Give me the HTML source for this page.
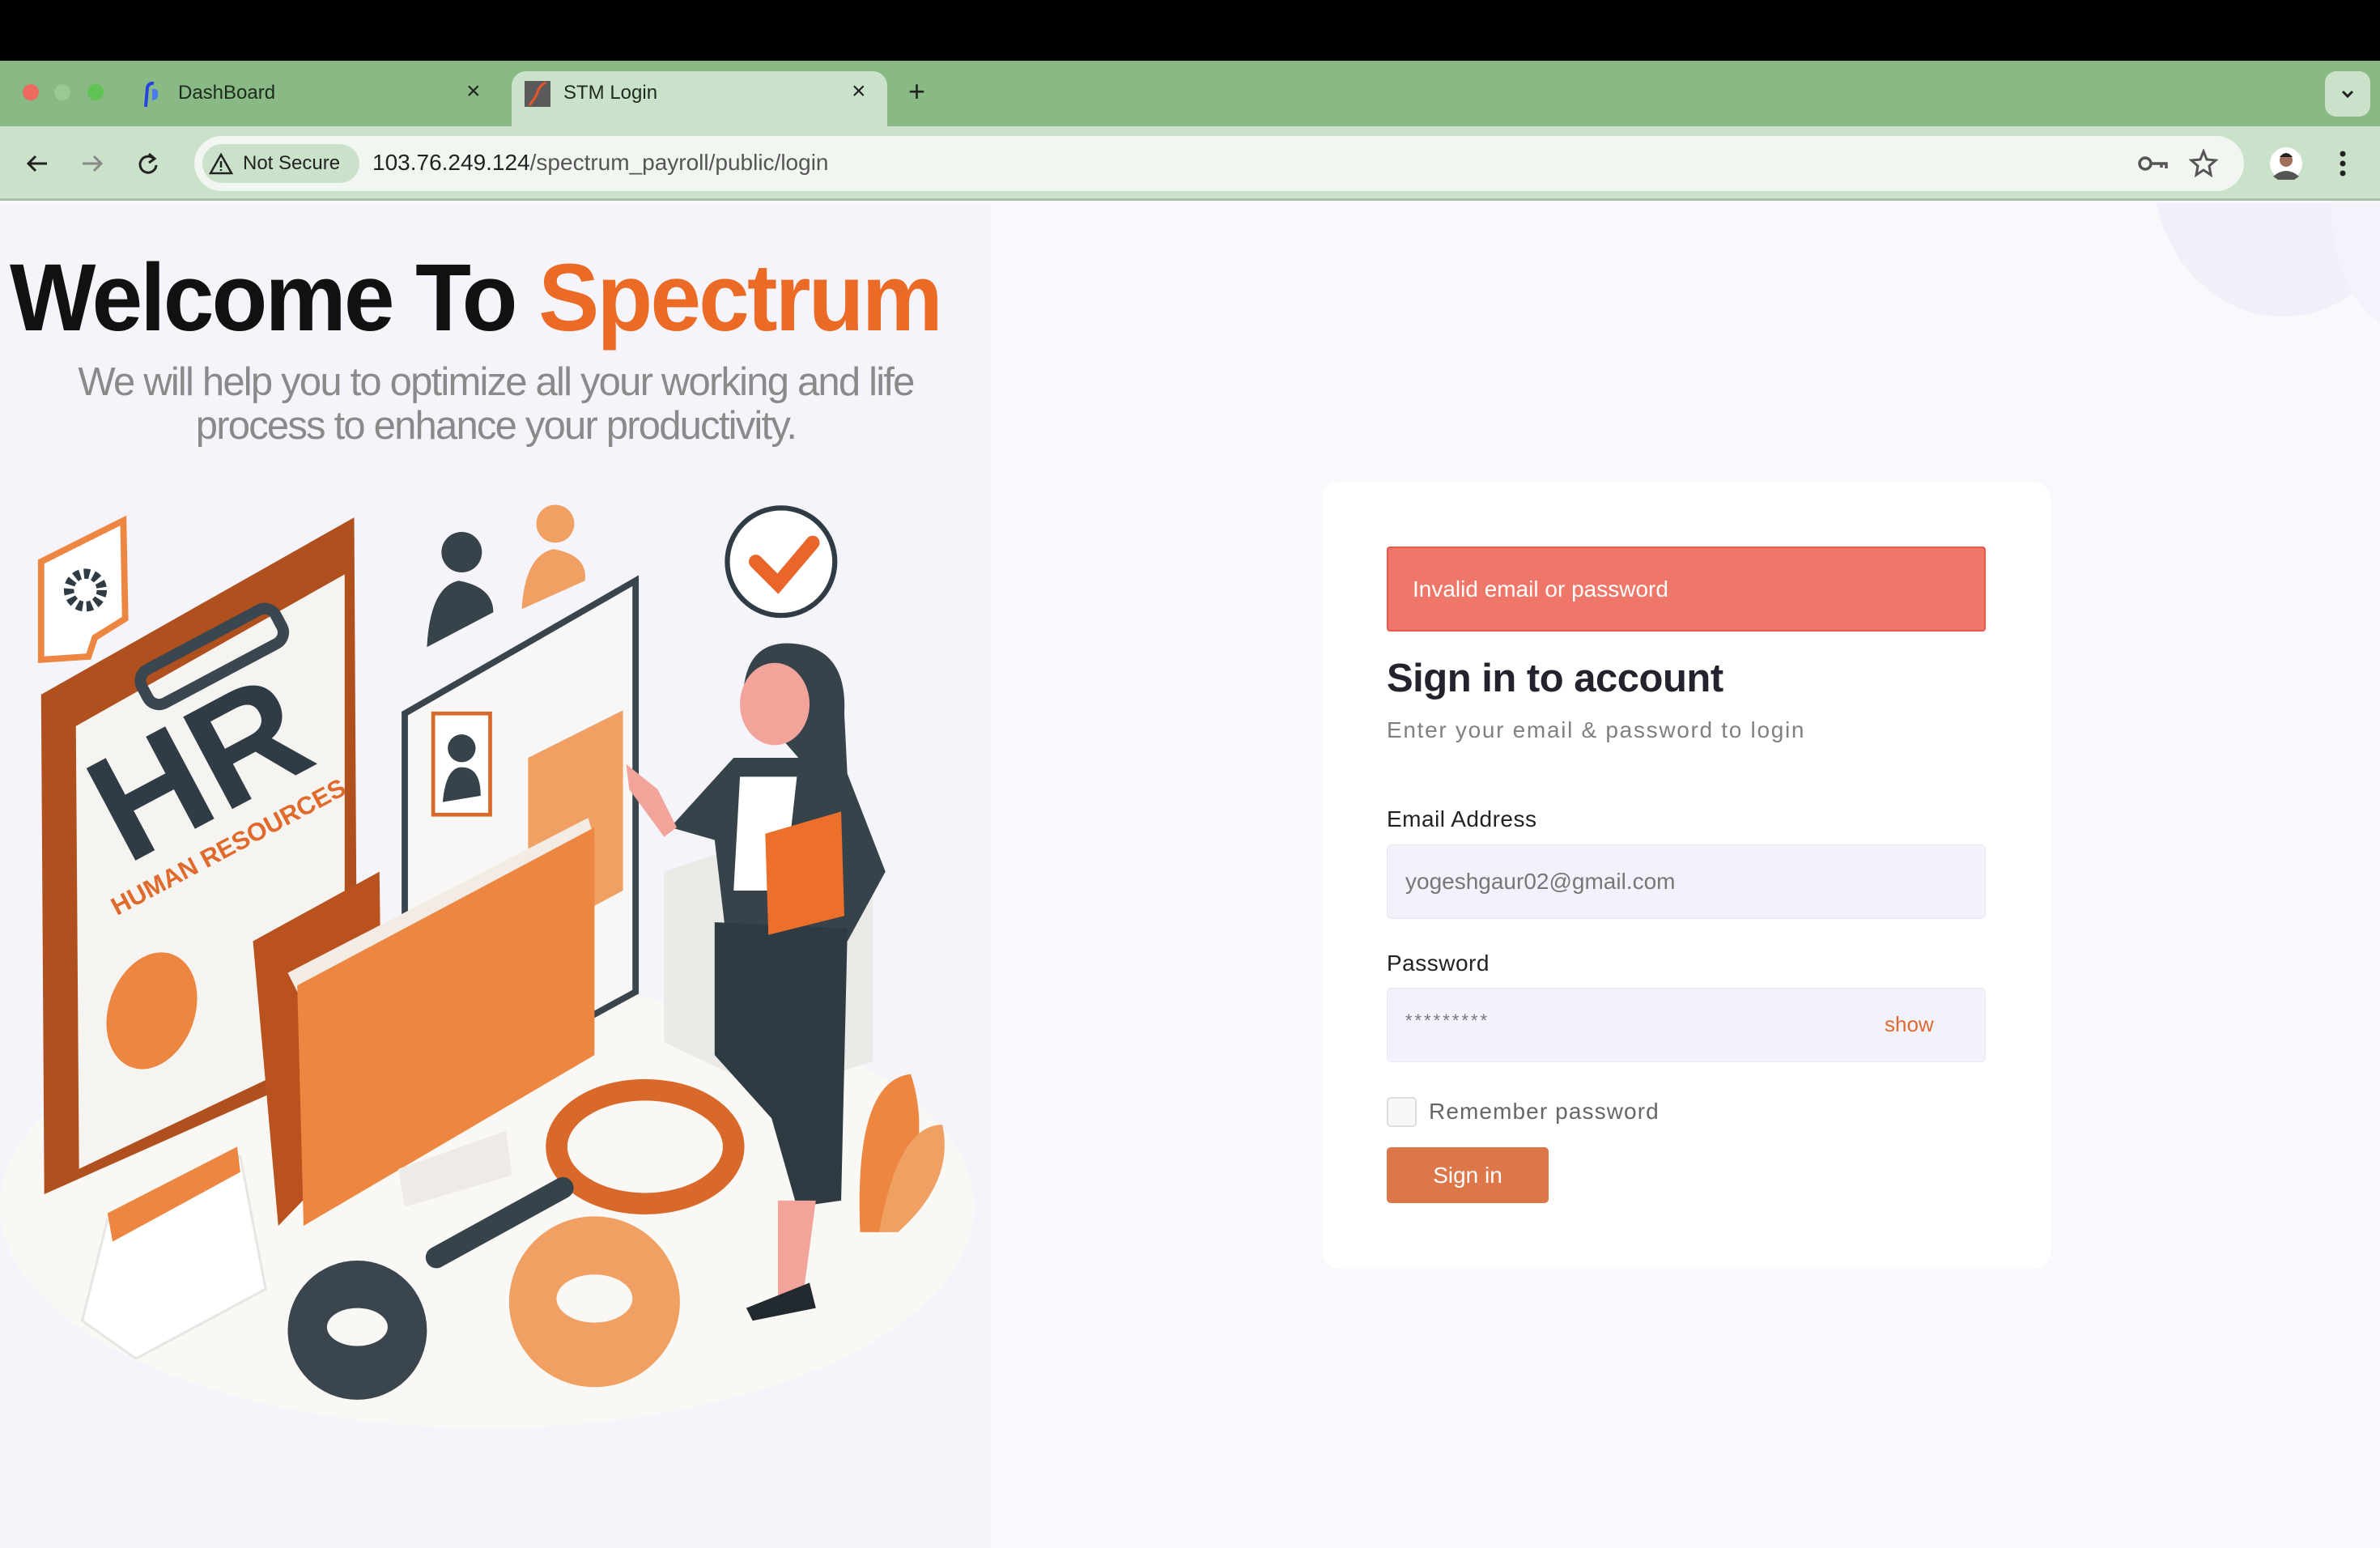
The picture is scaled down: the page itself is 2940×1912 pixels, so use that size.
<!DOCTYPE html>
<html><head><meta charset="utf-8">
<style>
*{margin:0;padding:0;box-sizing:border-box}
body{width:2940px;height:1912px;overflow:hidden;font-family:"Liberation Sans",sans-serif;background:#f8f8fd;position:relative}
.abs{position:absolute}
#black{left:0;top:0;width:2940px;height:75px;background:#000}
#tabs{left:0;top:75px;width:2940px;height:82px;background:#89b984}
#tool{left:0;top:156px;width:2940px;height:92px;background:#cbe2ca;border-bottom:3px solid #a9bfa8}
.dot{width:20px;height:20px;border-radius:50%;top:104px}
.tabtxt{font-size:24px;color:#1f2a1f;top:101px}
.x{font-size:30px;color:#222;top:96px}
#activetab{left:632px;top:88px;width:464px;height:72px;background:#cbe2ca;border-radius:18px 18px 0 0}
#url{left:240px;top:168px;width:2532px;height:68px;background:#f1f7f0;border-radius:34px}
#ns{left:250px;top:178px;width:194px;height:48px;background:#cbe2ca;border-radius:24px;font-size:24px;color:#222;line-height:48px;padding-left:50px}
#urltxt{left:460px;top:185px;font-size:28px;color:#222}
#urltxt span{color:#555}
#left{left:0;top:251px;width:1225px;height:1661px;background:#f6f4fb}
#title{left:12px;top:300px;font-size:118px;font-weight:bold;color:#111;letter-spacing:-3px;white-space:nowrap;transform-origin:0 0;transform:scaleX(.955)}
#title span{color:#ea6a26}
.sub{width:1225px;text-align:center;font-size:49px;color:#8a8a8a;letter-spacing:-1.8px;white-space:nowrap}
#card{left:1633px;top:595px;width:900px;height:972px;background:#fff;border-radius:20px}
#alert{left:1713px;top:675px;width:740px;height:105px;background:#ee776a;border:2px solid #e65a4c;border-radius:4px;color:#fff;font-size:28px;line-height:101px;padding-left:30px}
.lbl{font-size:28px;color:#222;left:1713px;letter-spacing:.5px}
.inp{left:1713px;width:740px;height:92px;background:#f1f2fb;border:1px solid #e8e9f3;border-radius:6px;font-size:28px;color:#777;padding-left:22px;line-height:90px}
</style></head><body>
<div class="abs" id="black"></div>
<div class="abs" id="tabs"></div>
<div class="abs" id="tool"></div>
<div class="abs dot" style="left:28px;background:#ec6a5e"></div>
<div class="abs dot" style="left:67px;background:#9cc895"></div>
<div class="abs dot" style="left:108px;background:#5fc454"></div>
<svg class="abs" style="left:170px;top:100px" width="34" height="34" viewBox="0 0 34 34"><path d="M10 32 L12 8 Q14 2 20 3" stroke="#2444e0" stroke-width="4" fill="none"/><path d="M18 10 Q28 8 24 22 L18 24Z" fill="#4a7af0"/></svg>
<div class="abs tabtxt" style="left:220px">DashBoard</div>
<div class="abs x" style="left:576px">×</div>
<div class="abs" id="activetab"></div>
<svg class="abs" style="left:648px;top:100px" width="32" height="32"><rect width="32" height="32" fill="#5a5a5a"/><path d="M6 30 Q14 20 16 14 Q18 6 26 2" stroke="#e4552a" stroke-width="3" fill="none"/></svg>
<div class="abs tabtxt" style="left:696px">STM Login</div>
<div class="abs x" style="left:1052px">×</div>
<div class="abs" style="left:1122px;top:92px;font-size:36px;color:#222">+</div>
<div class="abs" style="left:2872px;top:88px;width:56px;height:56px;background:#cbe2ca;border-radius:14px"></div>
<svg class="abs" style="left:2888px;top:104px" width="24" height="24"><path d="M6 9 L12 15 L18 9" stroke="#222" stroke-width="3" fill="none"/></svg>
<svg class="abs" style="left:30px;top:186px" width="170" height="32"><path d="M28 16 H6 M14 7 L5 16 L14 25" stroke="#222" stroke-width="3" fill="none"/><path d="M94 16 H72 M86 7 L95 16 L86 25" stroke="#888" stroke-width="3" fill="none"/><path d="M160 10 A10 10 0 1 0 163 18" stroke="#222" stroke-width="3" fill="none"/><path d="M154 4 L161 10 L154 15" stroke="#222" stroke-width="3" fill="none"/></svg>
<div class="abs" id="url"></div>
<div class="abs" id="ns">Not Secure</div>
<svg class="abs" style="left:258px;top:188px" width="30" height="28"><path d="M15 3 L28 26 H2 Z" stroke="#222" stroke-width="2.5" fill="none"/><path d="M15 11 V19 M15 21 V23" stroke="#222" stroke-width="2.5"/></svg>
<div class="abs" id="urltxt">103.76.249.124<span>/spectrum_payroll/public/login</span></div>
<svg class="abs" style="left:2640px;top:186px" width="40" height="32"><circle cx="10" cy="16" r="7" stroke="#555" stroke-width="3.5" fill="none"/><path d="M17 16 H36 V22 M30 16 V21" stroke="#555" stroke-width="3.5" fill="none"/></svg>
<svg class="abs" style="left:2704px;top:184px" width="36" height="36"><path d="M18 3 L22 13 L33 14 L25 21 L27 32 L18 26 L9 32 L11 21 L3 14 L14 13 Z" stroke="#555" stroke-width="3" fill="none"/></svg>
<svg class="abs" style="left:2804px;top:182px" width="40" height="40"><circle cx="20" cy="20" r="20" fill="#fff"/><circle cx="20" cy="16" r="8" fill="#a0705a"/><path d="M12 12 Q20 2 28 12" fill="#222"/><path d="M4 36 Q20 22 36 36 L30 40 H10Z" fill="#555"/></svg>
<svg class="abs" style="left:2888px;top:186px" width="12" height="34"><circle cx="6" cy="4" r="3.5" fill="#222"/><circle cx="6" cy="16" r="3.5" fill="#222"/><circle cx="6" cy="28" r="3.5" fill="#222"/></svg>

<svg class="abs" style="left:2600px;top:251px" width="340" height="200"><ellipse cx="220" cy="-40" rx="160" ry="180" fill="#f0f0fa"/><ellipse cx="380" cy="10" rx="100" ry="150" fill="#f3f3fb"/></svg>

<div class="abs" id="left"></div>
<div class="abs" id="title">Welcome To <span>Spectrum</span></div>
<div class="abs sub" style="left:0;top:444px">We will help you to optimize all your working and life</div>
<div class="abs sub" style="left:0;top:498px">process to enhance your productivity.</div>

<svg class="abs" style="left:0;top:600px" width="1225" height="1225" viewBox="0 0 1568 1568">
<ellipse cx="770" cy="1140" rx="770" ry="350" fill="#faf8f5"/>
<polygon points="65,330 560,50 565,900 70,1120" fill="#b0501e"/>
<polygon points="120,380 545,140 545,880 125,1080" fill="#f6f4f1"/>
<rect x="215" y="240" width="240" height="60" rx="20" transform="rotate(-28 335 270)" fill="none" stroke="#3a4750" stroke-width="18"/>
<text x="200" y="600" font-size="240" font-weight="bold" fill="#2f3b45" transform="rotate(-28 200 600)">HR</text>
<text x="185" y="680" font-size="40" font-weight="bold" fill="#e06a2c" transform="rotate(-28 185 680)">HUMAN RESOURCES</text>
<ellipse cx="240" cy="830" rx="68" ry="95" fill="#ec8640" transform="rotate(20 240 830)"/>
<polygon points="65,120 195,55 198,210 150,240 140,270 65,275" fill="#fff" stroke="#ec8640" stroke-width="10"/>
<circle cx="135" cy="165" r="26" fill="none" stroke="#2f3b45" stroke-width="16" stroke-dasharray="9 6"/>
<path d="M675 255 Q680 160 725 150 Q780 160 780 200 Z" fill="#37434b"/><circle cx="730" cy="105" r="32" fill="#37434b"/>
<path d="M825 195 Q830 110 875 100 Q930 110 925 150 Z" fill="#f0a062"/><circle cx="878" cy="60" r="30" fill="#f0a062"/>
<polygon points="640,360 1005,150 1005,800 640,1000" fill="#f8f7f5" stroke="#39444d" stroke-width="10"/>
<rect x="685" y="360" width="90" height="160" fill="#fff" stroke="#d9692b" stroke-width="6"/>
<circle cx="730" cy="415" r="22" fill="#37434b"/><path d="M700 500 Q705 445 730 445 Q760 445 760 490Z" fill="#37434b"/>
<polygon points="835,430 985,355 985,640 835,720" fill="#f0a062"/>
<polygon points="1050,610 1200,560 1380,640 1380,910 1220,960 1050,880" fill="#ebeae6"/>
<polygon points="400,720 600,610 605,1000 440,1170" fill="#b9521f"/>
<polygon points="455,770 930,525 940,560 470,800" fill="#f3ece4"/>
<polygon points="470,790 940,540 940,900 480,1170" fill="#ec8640"/>
<polygon points="630,1080 800,1020 810,1090 640,1140" fill="#eeebe6"/>
<ellipse cx="1020" cy="1045" rx="140" ry="90" fill="none" stroke="#d9692b" stroke-width="34"/>
<path d="M690 1220 L890 1110" stroke="#37434b" stroke-width="34" stroke-linecap="round"/>
<circle cx="565" cy="1335" r="110" fill="#3a454d"/><ellipse cx="565" cy="1330" rx="48" ry="30" fill="#faf8f5"/>
<circle cx="940" cy="1290" r="135" fill="#f0a062"/><ellipse cx="940" cy="1285" rx="60" ry="38" fill="#faf8f5"/>
<polygon points="170,1160 380,1060 420,1270 215,1380 130,1320" fill="#fff" stroke="#e8e6e2" stroke-width="4"/>
<polygon points="170,1150 375,1045 380,1085 178,1195" fill="#ec8640"/>
<circle cx="1235" cy="120" r="85" fill="#fff" stroke="#2f3b45" stroke-width="8"/>
<path d="M1195 120 L1230 155 L1285 90" stroke="#e9652a" stroke-width="22" fill="none" stroke-linecap="round"/>
<path d="M1175 330 Q1180 240 1260 250 Q1340 260 1335 360 L1340 460 L1280 450Z" fill="#37434b"/>
<ellipse cx="1225" cy="345" rx="55" ry="65" fill="#f2a49b"/>
<path d="M1060 540 L1160 430 L1330 430 L1400 610 L1340 720 L1150 730 L1130 560Z" fill="#37434b"/>
<polygon points="1170,460 1260,460 1240,640 1160,640" fill="#fff"/>
<path d="M1130 690 L1340 700 L1330 1130 L1260 1140 L1220 1000 L1130 900Z" fill="#2f3b42"/>
<path d="M1230 1130 L1290 1130 L1270 1280 L1230 1300Z" fill="#f2a49b"/>
<path d="M1180 1300 L1280 1260 L1290 1300 L1190 1320Z" fill="#22292f"/>
<polygon points="1210,550 1330,515 1335,680 1215,710" fill="#ec6f2c"/>
<path d="M990 440 L1040 480 L1070 540 L1050 555 L995 480Z" fill="#f2a49b"/>
<path d="M1360 1180 Q1350 940 1440 930 Q1480 1050 1400 1180Z" fill="#ec8640"/>
<path d="M1390 1180 Q1420 1010 1490 1010 Q1510 1100 1420 1180Z" fill="#f0a062"/>
</svg>

<div class="abs" id="card"></div>
<div class="abs" id="alert">Invalid email or password</div>
<div class="abs" style="left:1713px;top:810px;font-size:49px;font-weight:bold;color:#23232d;letter-spacing:-.5px">Sign in to account</div>
<div class="abs" style="left:1713px;top:886px;font-size:28px;color:#808080;letter-spacing:1.7px">Enter your email &amp; password to login</div>
<div class="abs lbl" style="top:996px">Email Address</div>
<div class="abs inp" style="top:1043px">yogeshgaur02@gmail.com</div>
<div class="abs lbl" style="top:1174px">Password</div>
<div class="abs inp" style="top:1220px;font-size:22px;letter-spacing:3px;line-height:80px">*********</div>
<div class="abs" style="left:2328px;top:1250px;font-size:26px;color:#e06a2c">show</div>
<div class="abs" style="left:1713px;top:1355px;width:37px;height:37px;border:2px solid #ddd;border-radius:5px;background:#f8f8f8"></div>
<div class="abs" style="left:1765px;top:1357px;font-size:28px;color:#666;letter-spacing:1.1px">Remember password</div>
<div class="abs" style="left:1713px;top:1417px;width:200px;height:69px;background:#dd774a;border-radius:5px;color:#fff;font-size:28px;text-align:center;line-height:69px">Sign in</div>
</body></html>
